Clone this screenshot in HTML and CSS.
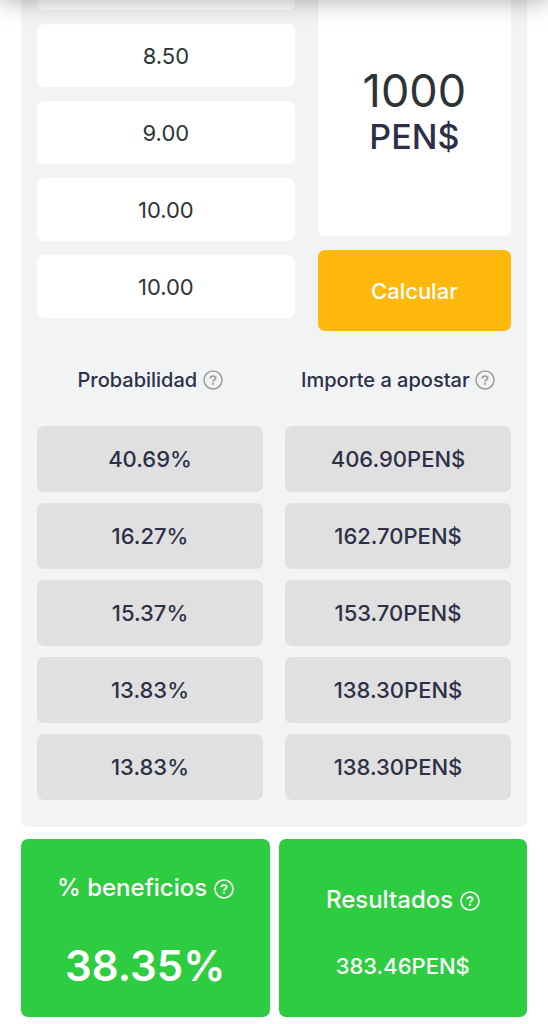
FILE: index.html
```html
<!DOCTYPE html>
<html lang="es">
    <head>
        <meta charset="UTF-8">
        <meta name="viewport" content="width=device-width, initial-scale=1.0">
        <title>Calculadora</title>
        <link rel="stylesheet" href="styles.css">
    </head>
    <body>
        <!-- shared help icon -->
        <svg class="sprite" aria-hidden="true">
            <symbol id="help" viewBox="0 0 20 20">
                <circle cx="10" cy="10" r="9" fill="none" stroke="currentColor" stroke-width="1.6"/>
                <path d="M7.3 8.2C7.4 6.8 8.5 6.1 10 6.1c1.6 0 2.7.8 2.7 2 0 1.7-2.6 1.5-2.6 3.3" fill="none" stroke="currentColor" stroke-width="1.9"/>
                <circle cx="10" cy="13.8" r="1.2" fill="currentColor"/>
            </symbol>
        </svg>
        <header class="topbar"></header>
        <main class="page">
            <form class="panel">
                <div class="inputs">
                    <div class="odds">
                        <input class="odd odd-cut" type="text" aria-label="Cuota 1">
                        <input class="odd" type="text" aria-label="Cuota 2" value="8.50">
                        <input class="odd" type="text" aria-label="Cuota 3" value="9.00">
                        <input class="odd" type="text" aria-label="Cuota 4" value="10.00">
                        <input class="odd" type="text" aria-label="Cuota 5" value="10.00">
                    </div>
                    <div class="stake">
                        <div class="amount">
                            <input class="amount-input" id="amount" type="text" value="1000">
                            <label class="amount-label" for="amount">PEN$</label>
                        </div>
                        <button class="calculate" type="button">Calcular</button>
                    </div>
                </div>
                <table class="bets">
                    <thead>
                        <tr>
                            <th>Probabilidad <svg class="help"><use href="#help"/></svg></th>
                            <th>Importe a apostar <svg class="help"><use href="#help"/></svg></th>
                        </tr>
                    </thead>
                    <tbody>
                        <tr><td>40.69%</td><td>406.90PEN$</td></tr>
                        <tr><td>16.27%</td><td>162.70PEN$</td></tr>
                        <tr><td>15.37%</td><td>153.70PEN$</td></tr>
                        <tr><td>13.83%</td><td>138.30PEN$</td></tr>
                        <tr><td>13.83%</td><td>138.30PEN$</td></tr>
                    </tbody>
                </table>
            </form>
            <section class="totals">
                <div class="total">
                    <h2 class="total-title">% beneficios <svg class="help"><use href="#help"/></svg></h2>
                    <p class="total-value total-big">38.35%</p>
                </div>
                <div class="total">
                    <h2 class="total-title">Resultados <svg class="help"><use href="#help"/></svg></h2>
                    <p class="total-value">383.46PEN$</p>
                </div>
            </section>
        </main>
    </body>
</html>
```
FILE: styles.css
```css
* {
    box-sizing: border-box;
}

body {
    margin: 0;
    background-color: #ffffff;
    color: #2d3047;
    font-family: "Inter", "Liberation Sans", sans-serif;
    font-size: 22px;
    font-weight: 500;
}

input, button {
    font: inherit;
    border: 0;
    border-radius: 7px;
    width: 100%;
}

.sprite {
    position: absolute;
    width: 0;
    height: 0;
}

/* only the shadow of the bar reaches into the page */
.topbar {
    position: fixed;
    top: -40px;
    left: 0;
    right: 0;
    height: 40px;
    box-shadow: 0 0 24px rgba(0, 0, 0, 0.35);
}

.page {
    padding: 0 21px 7px;
}

.panel {
    padding: 0 16px 16px;
    background-color: #f1f3f5;
    border-radius: 0 0 7px 7px;
}

.inputs {
    display: grid;
    grid-template-columns: 4fr 3fr;
    column-gap: 23px;
}

.odds {
    display: flex;
    flex-direction: column;
    gap: 14px;
}

.odd {
    height: 63px;
    padding: 0;
    background-color: #ffffff;
    color: #2d3436;
    font-weight: 400;
    text-align: center;
}

.odd-cut {
    height: 10px;
    border-radius: 0 0 7px 7px;
}

.stake {
    display: flex;
    flex-direction: column;
    gap: 14px;
}

.amount {
    height: 236px;
    padding-top: 64px;
    background-color: #ffffff;
    border-radius: 0 0 7px 7px;
    text-align: center;
}

.amount-input {
    display: block;
    height: 52px;
    padding: 0;
    background: none;
    color: #2d3436;
    font-size: 45px;
    font-weight: 400;
    text-align: center;
}

.amount-label {
    display: block;
    font-size: 34px;
    line-height: 42px;
}

.calculate {
    height: 81px;
    background-color: #ffb80c;
    color: #ffffff;
}

.bets {
    width: calc(100% + 44px);
    margin: 3px -22px 0;
    border-spacing: 22px 11px;
    table-layout: fixed;
}

.bets th {
    height: 70px;
    padding: 0;
    font-size: 20px;
    font-weight: 500;
    white-space: nowrap;
}

.bets td {
    height: 66px;
    padding: 0;
    background-color: #e0e0e0;
    border-radius: 7px;
    text-align: center;
}

.help {
    width: 20px;
    height: 20px;
    vertical-align: -3px;
}

.bets .help {
    color: #a0a0a0;
}

.totals {
    display: grid;
    grid-template-columns: 1fr 1fr;
    gap: 9px;
    margin-top: 12px;
}

.total {
    display: flex;
    flex-direction: column;
    align-items: center;
    justify-content: center;
    gap: 36px;
    height: 178px;
    padding-top: 8px;
    background-color: #2ecc40;
    border-radius: 7px;
    color: #ffffff;
}

.total-title {
    margin: 0;
    font-size: 24px;
    font-weight: 500;
    line-height: 32px;
}

.total-value {
    margin: 0;
    line-height: 28px;
}

.total-big {
    font-size: 42px;
    font-weight: 600;
    line-height: 52px;
}
```
